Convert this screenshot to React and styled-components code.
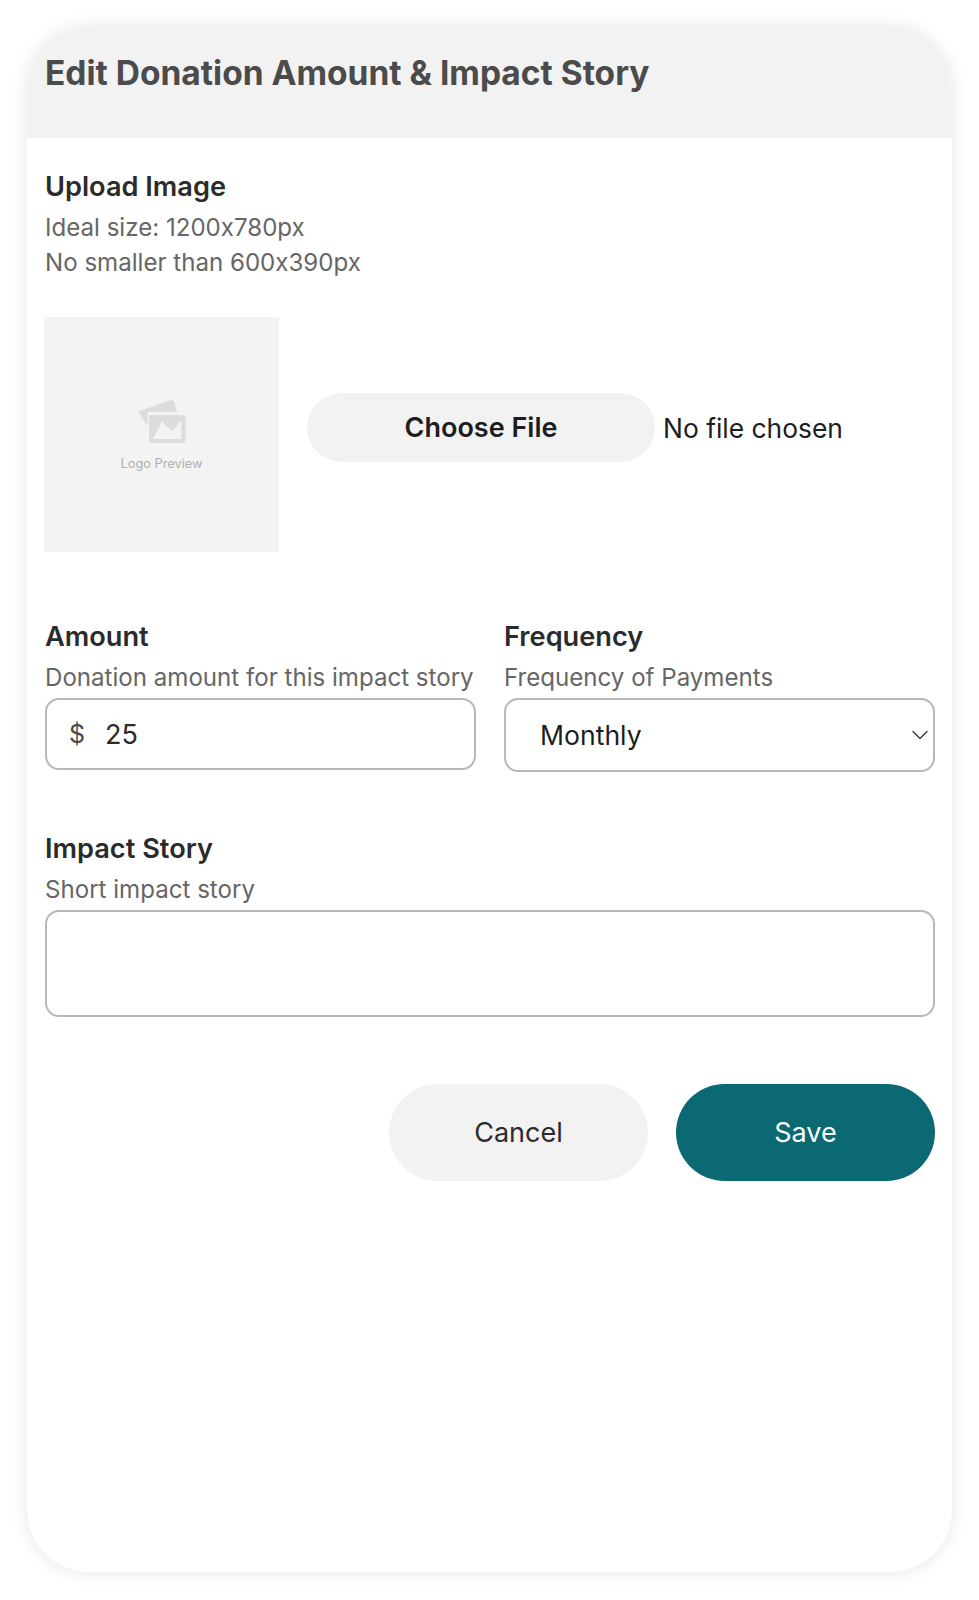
import React from 'react'
import styled, { createGlobalStyle } from 'styled-components'
import { ChevronDown } from 'lucide-react'

const GlobalStyle = createGlobalStyle`
  html, body {
    margin: 0;
    padding: 0;
    background: #fff;
  }
  * {
    box-sizing: border-box;
  }
  body {
    font-family: Inter, "Liberation Sans", sans-serif;
    font-feature-settings: "calt" 0;
    color: #2b2b2b;
  }
`

const Page = styled.div`
  width: 979px;
  height: 1600px;
  padding: 27px 27px 28px;
`

const Card = styled.div`
  height: 100%;
  background: #fff;
  border-radius: 62px;
  overflow: hidden;
  box-shadow: 0 0 18px rgba(0, 0, 0, 0.1);
`

const Header = styled.div`
  height: 111px;
  background: #f2f2f2;
  padding: 26px 18px 0;
`

const Title = styled.h1`
  margin: 0;
  font-size: 33.5px;
  line-height: 40px;
  font-weight: 700;
  color: #4b4b4b;
`

const Body = styled.div`
  padding: 31px 17px 0 18px;
`

const Label = styled.div`
  font-size: 27.2px;
  line-height: 36px;
  font-weight: 600;
  color: #2b2b2b;
`

const Hint = styled.div`
  font-size: 24.1px;
  line-height: 35px;
  color: #666;
  margin-top: ${(p) => (p.$first ? '5px' : '0')};
`

const UploadRow = styled.div`
  display: flex;
  align-items: flex-start;
  margin: 37px 0 0 -1px;
`

const Preview = styled.div`
  width: 235px;
  height: 235px;
  background: #f3f3f3;
  flex: none;
  display: flex;
  flex-direction: column;
  align-items: center;
  padding-top: 82px;
`

const PreviewText = styled.div`
  margin-top: 11px;
  font-size: 12.8px;
  line-height: 16px;
  color: #b0b0b0;
`

const FileRow = styled.div`
  display: flex;
  align-items: center;
  margin: 76px 0 0 28px;
`

const ChooseButton = styled.button`
  width: 348px;
  height: 69px;
  border: none;
  border-radius: 35px;
  background: #f2f2f2;
  font: 600 27px Inter, sans-serif;
  font-feature-settings: "calt" 0;
  color: #1d1d1d;
`

const FileStatus = styled.span`
  margin-left: 8px;
  font-size: 26.4px;
  color: #1d1d1d;
`

const Columns = styled.div`
  display: grid;
  grid-template-columns: 431px 431px;
  column-gap: 28px;
  margin-top: 67px;
`

const Field = styled.div`
  min-width: 0;
`

const AmountBox = styled.div`
  display: flex;
  align-items: center;
  height: 72px;
  margin-top: 3px;
  padding-left: 22px;
  border: 2px solid #b8b8b8;
  border-radius: 14px;
  font-size: 27px;
  color: #2b2b2b;
`

const Currency = styled.span`
  width: 36px;
  color: #4a4a4a;
  font-size: 25px;
`

const SelectWrap = styled.div`
  position: relative;
  margin-top: 3px;
`

const Select = styled.select`
  appearance: none;
  display: block;
  width: 100%;
  height: 74px;
  padding-left: 34px;
  border: 2px solid #b8b8b8;
  border-radius: 14px;
  background: #fff;
  font: 400 26.6px Inter, sans-serif;
  color: #1d1d1d;
`

const Chevron = styled(ChevronDown)`
  position: absolute;
  right: 1px;
  top: 23px;
  color: #333;
  pointer-events: none;
`

const StorySection = styled.div`
  margin-top: 59px;
`

const StoryInput = styled.textarea`
  display: block;
  width: 100%;
  height: 107px;
  margin-top: 3px;
  border: 2px solid #b8b8b8;
  border-radius: 14px;
  resize: none;
  outline: none;
`

const Actions = styled.div`
  display: flex;
  justify-content: flex-end;
  gap: 28px;
  margin-top: 67px;
`

const ActionButton = styled.button`
  width: 259px;
  height: 97px;
  border: none;
  border-radius: 49px;
  font: 400 27px Inter, sans-serif;
  background: ${(p) => (p.$primary ? '#0a6972' : '#f2f2f2')};
  color: ${(p) => (p.$primary ? '#fff' : '#2b2b2b')};
`

function PreviewIcon() {
  return (
    <svg width="48" height="46" viewBox="0 0 48 46">
      <path d="M0 12.5 L33 1 Q35.5 0.5 36.5 3 L39 13 H11 Q9.5 13 9.5 15 V27 Z" fill="#dcdcdc" />
      <path
        fillRule="evenodd"
        d="M11 18 Q11 16 13 16 H46 Q47.500 16 47.500 18 V42 Q47.500 44 46 44 H13 Q11 44 11 42 Z M15 40 H43.500 L43 21 L34.500 32 L27.500 27 L24 22 Z"
        fill="#dcdcdc"
      />
    </svg>
  )
}

function App() {
  return (
    <>
      <GlobalStyle />
      <Page>
        <Card>
          <Header>
            <Title>Edit Donation Amount &amp; Impact Story</Title>
          </Header>
          <Body>
            <Label>Upload Image</Label>
            <Hint $first>Ideal size: 1200x780px</Hint>
            <Hint>No smaller than 600x390px</Hint>
            <UploadRow>
              <Preview>
                <PreviewIcon />
                <PreviewText>Logo Preview</PreviewText>
              </Preview>
              <FileRow>
                <ChooseButton type="button">Choose File</ChooseButton>
                <FileStatus>No file chosen</FileStatus>
              </FileRow>
            </UploadRow>

            <Columns>
              <Field>
                <Label>Amount</Label>
                <Hint $first>Donation amount for this impact story</Hint>
                <AmountBox>
                  <Currency>$</Currency>
                  <span>25</span>
                </AmountBox>
              </Field>
              <Field>
                <Label>Frequency</Label>
                <Hint $first>Frequency of Payments</Hint>
                <SelectWrap>
                  <Select defaultValue="Monthly">
                    <option>Monthly</option>
                    <option>Yearly</option>
                  </Select>
                  <Chevron size={28} strokeWidth={1.1} />
                </SelectWrap>
              </Field>
            </Columns>

            <StorySection>
              <Label>Impact Story</Label>
              <Hint $first>Short impact story</Hint>
              <StoryInput />
            </StorySection>

            <Actions>
              <ActionButton type="button">Cancel</ActionButton>
              <ActionButton type="button" $primary>Save</ActionButton>
            </Actions>
          </Body>
        </Card>
      </Page>
    </>
  )
}

export default App
